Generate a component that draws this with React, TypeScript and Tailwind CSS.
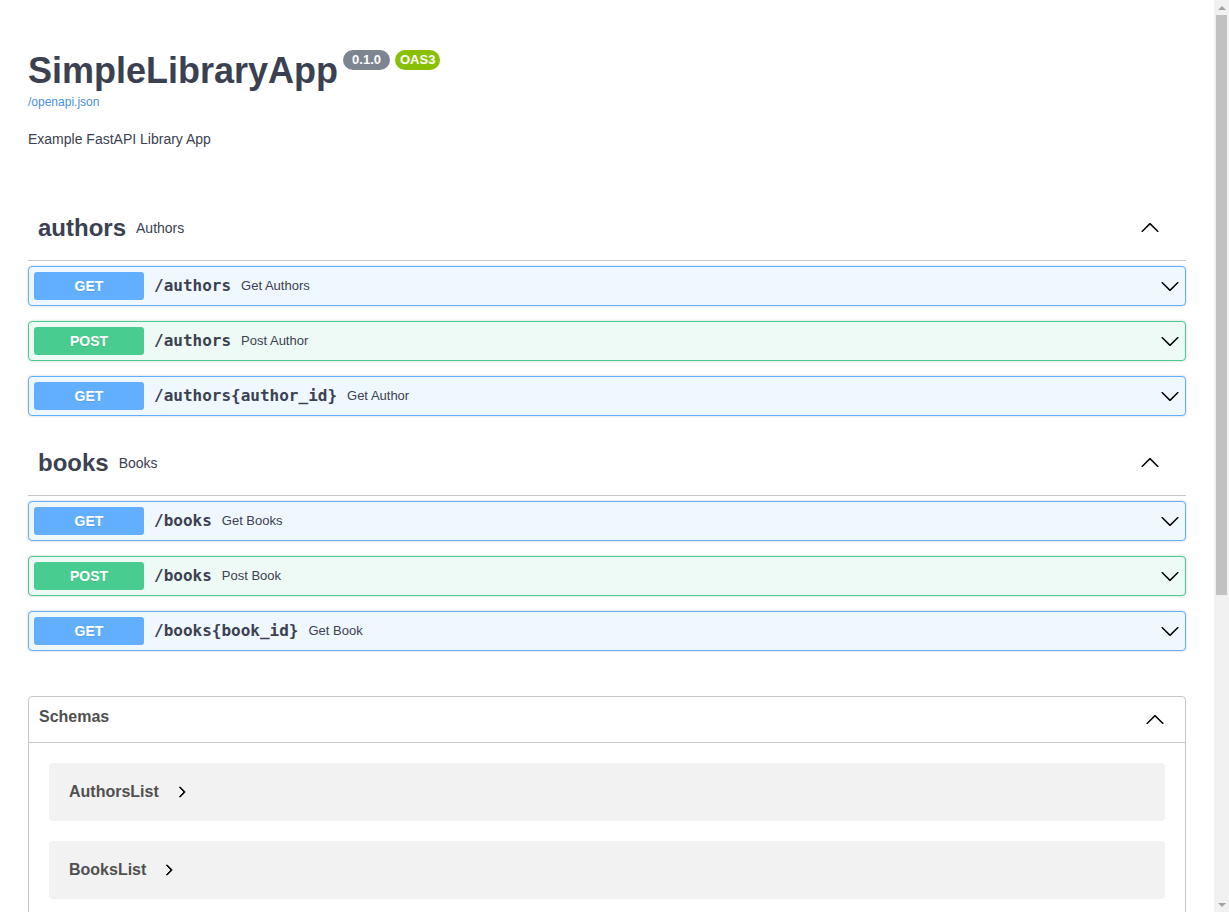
import React from "react";

const sans = "font-['Liberation_Sans',Arial,sans-serif]";

function ArrowDown({ className = "" }: { className?: string }) {
  return (
    <svg viewBox="0 0 20 20" width="20" height="20" className={className} aria-hidden="true">
      <path
        fill="#000"
        d="M17.418 6.109c.272-.268.709-.268.979 0s.271.701 0 .969l-7.908 7.83c-.27.268-.707.268-.979 0l-7.908-7.83c-.27-.268-.27-.701 0-.969.271-.268.709-.268.979 0L10 13.25l7.418-7.141z"
      />
    </svg>
  );
}

function ArrowUp({ className = "" }: { className?: string }) {
  return (
    <svg viewBox="0 0 20 20" width="20" height="20" className={className} aria-hidden="true">
      <path
        fill="#000"
        d="M2.582 13.891c-.272.268-.709.268-.979 0s-.271-.701 0-.969l7.908-7.83c.27-.268.707-.268.979 0l7.908 7.83c.27.268.27.701 0 .969-.271.268-.709.268-.978 0L10 6.75l-7.418 7.141z"
      />
    </svg>
  );
}

function ArrowRight() {
  return (
    <svg viewBox="0 0 20 20" width="12" height="12" aria-hidden="true">
      <path
        fill="#000"
        d="M13.25 10L6.109 2.58c-.268-.27-.268-.707 0-.979.268-.27.701-.27.969 0l7.83 7.908c.268.271.268.709 0 .979l-7.83 7.908c-.268.271-.701.27-.969 0-.268-.269-.268-.707 0-.979L13.25 10z"
        stroke="#000"
        strokeWidth="1.6"
      />
    </svg>
  );
}

type Op = { method: "GET" | "POST"; path: string; summary: string };

function OpBlock({ op }: { op: Op }) {
  const get = op.method === "GET";
  return (
    <div
      className={`mb-[15px] flex h-[40px] items-center rounded-[4px] border p-[5px] shadow-[0_0_3px_rgba(0,0,0,0.19)] ${
        get ? "border-[#61affe] bg-[#eff7ff]" : "border-[#49cc90] bg-[#edfaf5]"
      }`}
    >
      <div
        className={`flex h-[28px] w-[110px] shrink-0 items-center justify-center rounded-[3px] text-[14px] font-bold text-white [text-shadow:0_1px_0_rgba(0,0,0,0.1)] ${
          get ? "bg-[#61affe]" : "bg-[#49cc90]"
        }`}
      >
        {op.method}
      </div>
      <span className="pl-[10px] pr-[10px] font-['DejaVu_Sans_Mono',monospace] text-[16px] font-bold text-[#3b4151]">
        {op.path}
      </span>
      <span className="text-[13px] text-[#3b4151]">{op.summary}</span>
      <div className="flex-1" />
      <ArrowDown />
    </div>
  );
}

function TagSection({ name, desc, ops }: { name: string; desc: string; ops: Op[] }) {
  return (
    <div>
      <div className="mb-[5px] flex h-[65px] items-center border-b border-[rgba(59,65,81,0.3)] pl-[10px] pr-[26px]">
        <span className="text-[24px] font-bold text-[#3b4151]">{name}</span>
        <span className="pl-[10px] text-[14px] text-[#3b4151]">{desc}</span>
        <div className="flex-1" />
        <ArrowUp />
      </div>
      {ops.map((o, i) => (
        <OpBlock key={i} op={o} />
      ))}
    </div>
  );
}

function ModelItem({ name }: { name: string }) {
  return (
    <div className="mb-[20px] flex h-[58px] items-center rounded-[4px] bg-[#f2f2f2] px-[20px]">
      <span className="text-[16px] font-bold text-[#505050]">{name}</span>
      <span className="ml-[17px] flex items-center">
        <ArrowRight />
      </span>
    </div>
  );
}

export default function App() {
  return (
    <div className={`flex h-screen w-full overflow-hidden bg-white ${sans}`}>
      <div className="min-w-0 flex-1 overflow-hidden px-[28px]">
        <div className="pt-[50px]">
          <div className="flex items-start">
            <h2 className="text-[36px] font-bold leading-[42px] text-[#3b4151]">SimpleLibraryApp</h2>
            <span className="ml-[5px] flex h-[20px] items-center rounded-full bg-[#7d8492] px-[9px] text-[13px] font-bold text-white">
              0.1.0
            </span>
            <span className="ml-[5px] flex h-[20px] items-center rounded-full bg-[#89bf04] px-[5px] text-[13px] font-bold text-white">
              OAS3
            </span>
          </div>
          <a className="mt-[3px] block text-[12px] leading-[14px] text-[#4990e2]" href="#">
            /openapi.json
          </a>
          <p className="mt-[22px] text-[14px] leading-[16px] text-[#3b4151]">Example FastAPI Library App</p>
        </div>

        <div className="mt-[49px]">
          <TagSection
            name="authors"
            desc="Authors"
            ops={[
              { method: "GET", path: "/authors", summary: "Get Authors" },
              { method: "POST", path: "/authors", summary: "Post Author" },
              { method: "GET", path: "/authors{author_id}", summary: "Get Author" },
            ]}
          />
          <TagSection
            name="books"
            desc="Books"
            ops={[
              { method: "GET", path: "/books", summary: "Get Books" },
              { method: "POST", path: "/books", summary: "Post Book" },
              { method: "GET", path: "/books{book_id}", summary: "Get Book" },
            ]}
          />
        </div>

        <div className="mt-[45px] rounded-[4px] border border-[rgba(59,65,81,0.3)]">
          <div className="flex h-[46px] items-center border-b border-[rgba(59,65,81,0.3)] pl-[10px] pr-[20px]">
            <span className="pb-[6px] text-[16px] font-bold text-[#505050]">Schemas</span>
            <div className="flex-1" />
            <ArrowUp />
          </div>
          <div className="px-[20px] pt-[20px]">
            <ModelItem name="AuthorsList" />
            <ModelItem name="BooksList" />
          </div>
        </div>
      </div>

      <div className="flex w-[15px] shrink-0 flex-col items-center bg-[#f1f1f1]">
        <div className="flex h-[15px] w-full items-center justify-center">
          <div className="h-0 w-0 border-x-[4px] border-b-[4px] border-x-transparent border-b-[#a3a3a3]" />
        </div>
        <div className="h-[580px] w-[11px] bg-[#c1c1c1]" />
        <div className="flex-1" />
        <div className="flex h-[15px] w-full items-center justify-center">
          <div className="h-0 w-0 border-x-[4px] border-t-[4px] border-x-transparent border-t-[#a3a3a3]" />
        </div>
      </div>
    </div>
  );
}
